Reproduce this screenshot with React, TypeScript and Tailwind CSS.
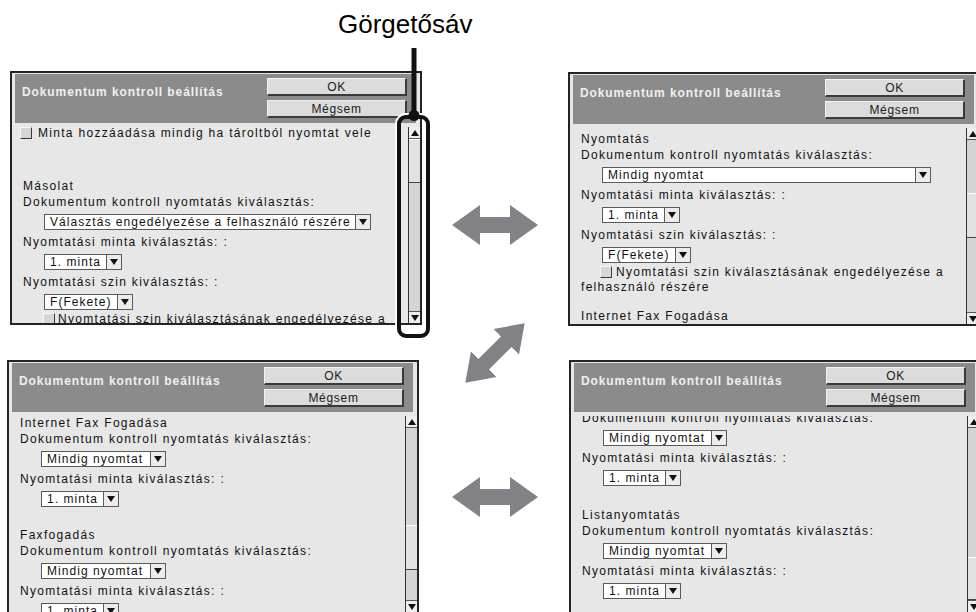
import type { ReactNode } from "react";

const FONT = "font-['Liberation_Sans',Arial,Helvetica,sans-serif]";

function Line({ children }: { children: ReactNode }) {
  return <div className="h-[16px] whitespace-nowrap leading-[16px]">{children}</div>;
}

function Check({ className = "" }: { className?: string }) {
  return (
    <span
      className={`inline-block h-[12px] w-[12px] shrink-0 border-t border-l border-t-[#f6f6f6] border-l-[#f6f6f6] border-r-[1.5px] border-b-[1.5px] border-r-[#3a3a3a] border-b-[#3a3a3a] bg-[#d6d6d6] align-[-2px] ${className}`}
    />
  );
}

function Select({ width, children }: { width: string; children: ReactNode }) {
  return (
    <div className="flex h-[24px] items-center pl-[21px]">
      <div className={`flex h-[16px] border border-[#5a5a5a] bg-white ${width}`}>
        <span className="min-w-0 flex-1 overflow-hidden whitespace-nowrap pl-[5px] leading-[14px] tracking-[1.05px]">
          {children}
        </span>
        <span className="flex w-[15px] shrink-0 items-center justify-center border-l border-[#5a5a5a] bg-[#ececec]">
          <span className="h-0 w-0 border-x-[4px] border-t-[6px] border-x-transparent border-t-[#111]" />
        </span>
      </div>
    </div>
  );
}

function Button({ children }: { children: ReactNode }) {
  return (
    <div className="flex h-[18px] items-center justify-center border-t border-l border-t-[#f2f2f2] border-l-[#f2f2f2] border-r-2 border-b-2 border-r-[#3a3a3a] border-b-[#3a3a3a] bg-[#dcdcdc] text-[12px] leading-none tracking-[0.7px] text-[#1a1a1a]">
      {children}
    </div>
  );
}

function ArrowCell({ up }: { up?: boolean }) {
  return (
    <div
      className={`flex h-[12px] shrink-0 items-center justify-center bg-[#eeeeee] ${up ? "border-b border-[#555]" : "border-t border-[#555]"}`}
    >
      {up ? (
        <span className="h-0 w-0 border-x-[4px] border-b-[6px] border-x-transparent border-b-[#111]" />
      ) : (
        <span className="h-0 w-0 border-x-[4px] border-t-[6px] border-x-transparent border-t-[#111]" />
      )}
    </div>
  );
}

function Scrollbar({ top, thumb }: { top: string; thumb: string }) {
  return (
    <div className="mt-[4px] flex w-[12px] shrink-0 flex-col border-l border-[#333] bg-[#d4d4d4]">
      <ArrowCell up />
      <div className="flex min-h-0 flex-1 flex-col">
        <div className={`shrink-0 ${top}`} />
        <div className={`shrink-0 border-t border-b border-t-white border-b-[#444] bg-[#e2e2e2] ${thumb}`} />
        <div className="flex-1" />
      </div>
      <ArrowCell />
    </div>
  );
}

interface PanelProps {
  className?: string;
  shift: string;
  top: string;
  thumb: string;
  children: ReactNode;
  overlay?: ReactNode;
}

function Panel({ className = "", shift, top, thumb, children, overlay }: PanelProps) {
  return (
    <div className={`relative h-[254px] w-[412px] shrink-0 border-2 border-[#242424] bg-[#e7e7e8] ${className}`}>
      <div className="flex h-full flex-col">
        <div className="mt-[1px] mr-[4px] ml-[3px] flex h-[49px] shrink-0 bg-[#8b8b8b]">
          <div className="flex-1 whitespace-nowrap pt-[10px] pl-[7px] text-[12px] font-bold leading-[16px] tracking-[0.9px] text-[#f0f0f0]">
            Dokumentum kontroll beállítás
          </div>
          <div className="mr-[9px] flex w-[140px] flex-col gap-[4px] pt-[4px]">
            <Button>OK</Button>
            <Button>Mégsem</Button>
          </div>
        </div>
        <div className="flex min-h-0 flex-1">
          <div className="mt-[4px] min-w-0 flex-1 overflow-hidden pl-[11px] text-[12px] tracking-[1.3px] text-[#111]">
            <div className={shift}>{children}</div>
          </div>
          <Scrollbar top={top} thumb={thumb} />
        </div>
      </div>
      {overlay}
    </div>
  );
}

function HArrow() {
  return (
    <svg width="86" height="40" viewBox="0 0 86 40">
      <polygon points="0,20 28,0 28,12 58,12 58,0 86,20 58,40 58,28 28,28 28,40" fill="#808285" />
    </svg>
  );
}

function DArrow() {
  return (
    <svg width="70" height="70" viewBox="0 0 70 70" overflow="visible">
      <polygon
        transform="rotate(-45 35 35)"
        points="-7,35 19,17 19,27.5 51,27.5 51,17 77,35 51,53 51,42.5 19,42.5 19,53"
        fill="#808285"
      />
    </svg>
  );
}

function Callout() {
  return (
    <div className="absolute top-[42px] left-[385px] h-[223px] w-[33px] rounded-[9px] border-4 border-[#111] shadow-[0_0_0_2px_#fff]">
      <div className="absolute bottom-full left-1/2 h-[71px] w-[5px] -translate-x-1/2 bg-[#111]" />
      <div className="absolute -top-[9px] left-1/2 h-[11px] w-[11px] -translate-x-1/2 rounded-full bg-[#111]" />
    </div>
  );
}

export default function App() {
  return (
    <div className={`${FONT} relative h-[612px] w-[976px] overflow-hidden bg-white`}>
      <div className="h-[71px] pt-[9px] pl-[338px] text-[26px] leading-[30px] text-black">Görgetősáv</div>
      <div className="flex">
        <div className="flex w-[422px] shrink-0 flex-col">
          <Panel className="ml-[10px]" shift="-mt-[2px]" top="h-0" thumb="h-[44px]" overlay={<Callout />}>
            <div className="-ml-[3px] h-[16px] whitespace-nowrap leading-[16px]">
              <Check className="mr-[6px]" />
              Minta hozzáadása mindig ha tároltból nyomtat vele
            </div>
            <div className="h-[37px]" />
            <Line>Másolat</Line>
            <Line>Dokumentum kontroll nyomtatás kiválasztás:</Line>
            <Select width="w-[327px]">Választás engedélyezése a felhasználó részére</Select>
            <Line>Nyomtatási minta kiválasztás: :</Line>
            <Select width="w-[78px]">1. minta</Select>
            <Line>Nyomtatási szin kiválasztás: :</Line>
            <Select width="w-[89px]">F(Fekete)</Select>
            <div className="-mt-[3px] h-[16px] whitespace-nowrap leading-[16px]">
              <Check className="mr-[3px] ml-[20px]" />
              Nyomtatási szin kiválasztásának engedélyezése a
            </div>
          </Panel>
          <Panel className="mt-[35px] ml-[7px]" shift="-mt-[1px]" top="h-[97px]" thumb="h-[45px]">
            <Line>Internet Fax Fogadása</Line>
            <Line>Dokumentum kontroll nyomtatás kiválasztás:</Line>
            <Select width="w-[125px]">Mindig nyomtat</Select>
            <Line>Nyomtatási minta kiválasztás: :</Line>
            <Select width="w-[78px]">1. minta</Select>
            <div className="h-[16px]" />
            <Line>Faxfogadás</Line>
            <Line>Dokumentum kontroll nyomtatás kiválasztás:</Line>
            <Select width="w-[125px]">Mindig nyomtat</Select>
            <Line>Nyomtatási minta kiválasztás: :</Line>
            <Select width="w-[78px]">1. minta</Select>
          </Panel>
        </div>

        <div className="flex w-[146px] shrink-0 flex-col items-center">
          <div className="mt-[134px]">
            <HArrow />
          </div>
          <div className="mt-[73px]">
            <DArrow />
          </div>
          <div className="mt-[89px]">
            <HArrow />
          </div>
        </div>

        <div className="flex flex-col">
          <Panel className="mt-[1px]" shift="mt-[3px]" top="h-[53px]" thumb="h-[45px]">
            <Line>Nyomtatás</Line>
            <Line>Dokumentum kontroll nyomtatás kiválasztás:</Line>
            <Select width="w-[329px]">Mindig nyomtat</Select>
            <Line>Nyomtatási minta kiválasztás: :</Line>
            <Select width="w-[78px]">1. minta</Select>
            <Line>Nyomtatási szin kiválasztás: :</Line>
            <Select width="w-[89px]">F(Fekete)</Select>
            <div className="-mt-[2px] whitespace-nowrap leading-[15px]">
              <Check className="mr-[4px] ml-[19px]" />
              Nyomtatási szin kiválasztásának engedélyezése a
              <br />
              felhasználó részére
            </div>
            <div className="h-[13px]" />
            <Line>Internet Fax Fogadása</Line>
          </Panel>
          <Panel className="mt-[34px] ml-[1px]" shift="-mt-[6px]" top="h-[129px]" thumb="h-[43px]">
            <Line>Dokumentum kontroll nyomtatás kiválasztás:</Line>
            <Select width="w-[124px]">Mindig nyomtat</Select>
            <Line>Nyomtatási minta kiválasztás: :</Line>
            <Select width="w-[78px]">1. minta</Select>
            <div className="h-[17px]" />
            <Line>Listanyomtatás</Line>
            <Line>Dokumentum kontroll nyomtatás kiválasztás:</Line>
            <Select width="w-[124px]">Mindig nyomtat</Select>
            <Line>Nyomtatási minta kiválasztás: :</Line>
            <Select width="w-[78px]">1. minta</Select>
          </Panel>
        </div>
      </div>
    </div>
  );
}
